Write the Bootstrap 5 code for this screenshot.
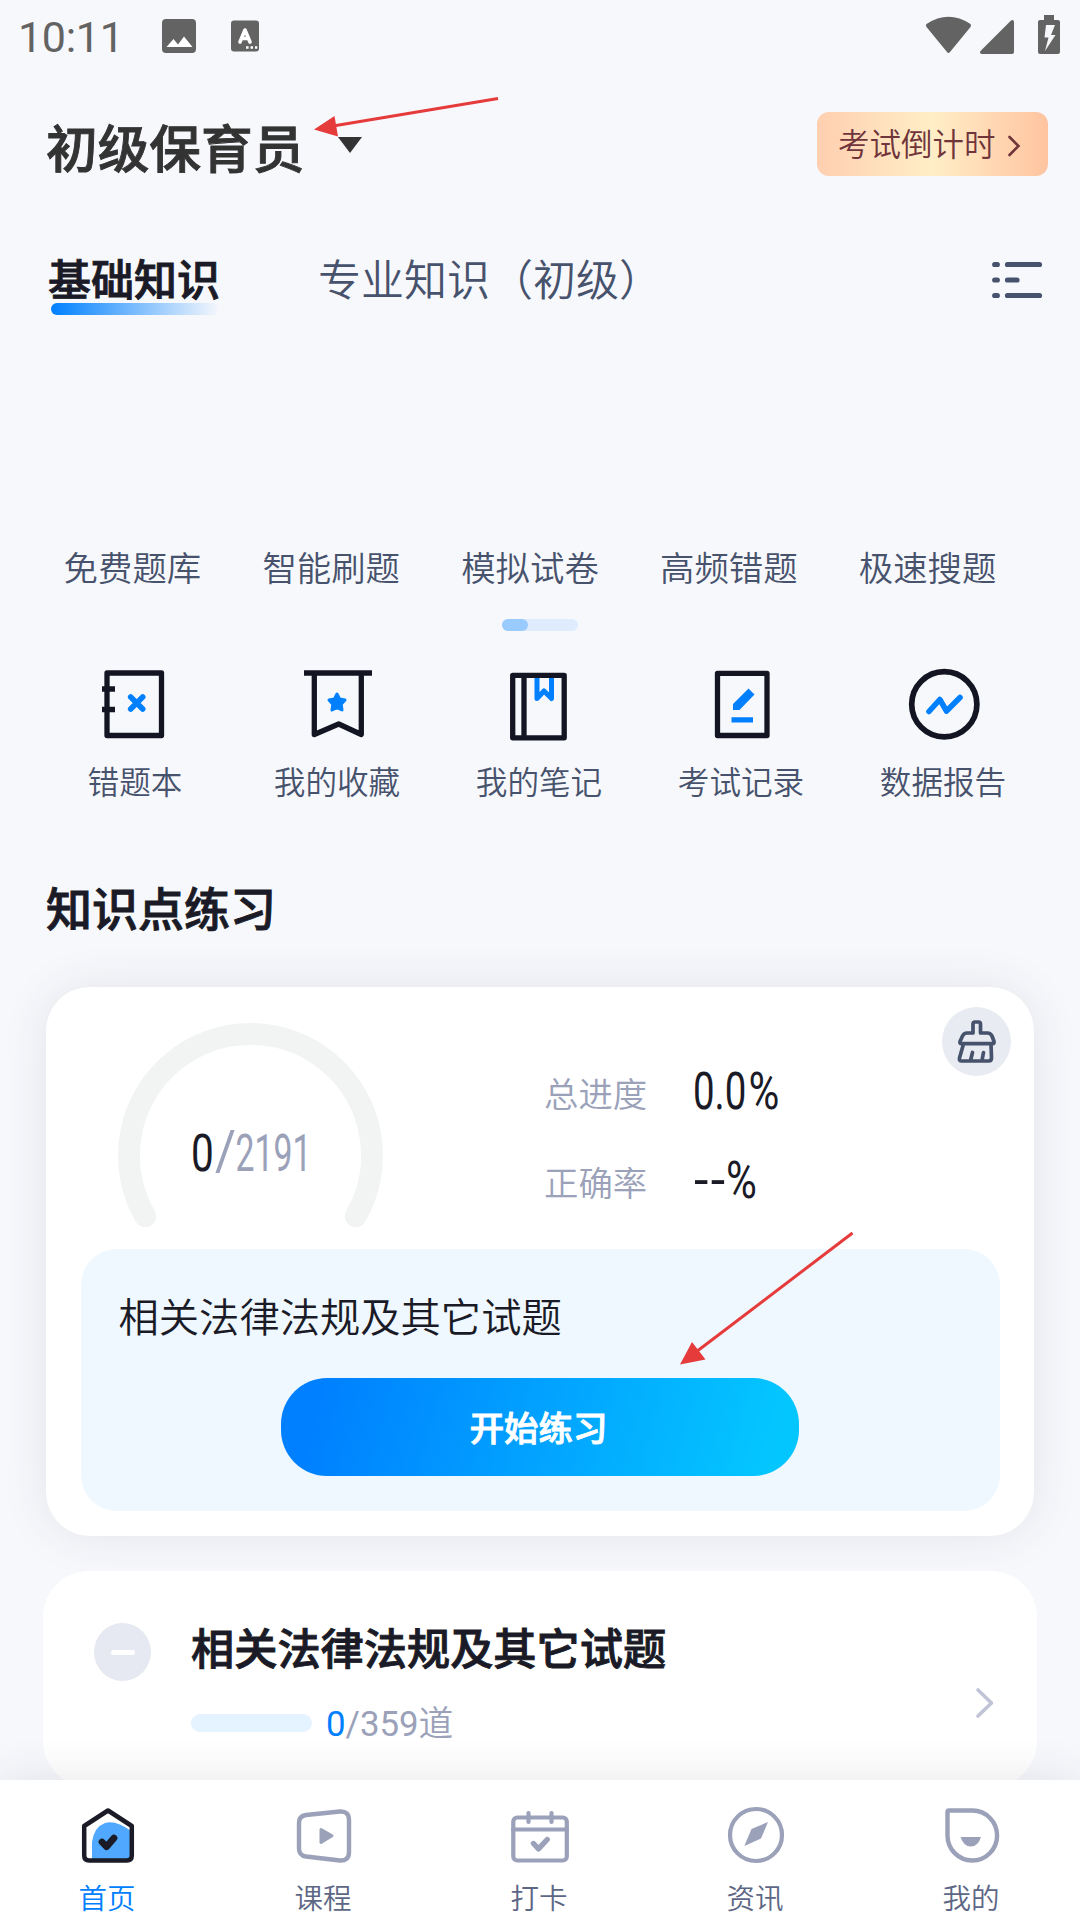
<!DOCTYPE html>
<html lang="zh-CN">
<head>
<meta charset="utf-8">
<meta name="viewport" content="width=device-width, initial-scale=1">
<title>初级保育员</title>
<link rel="stylesheet" href="https://cdn.jsdelivr.net/npm/bootstrap@5.3.0/dist/css/bootstrap.min.css">
<style>
:root{--ink:#1a1b26;--slate:#47526c;--mute:#9aa1b9;--brand:#0080ff}
body{width:1080px;height:1920px;overflow:hidden;background:#f7f8fc;font-family:"Noto Sans CJK SC",sans-serif;font-weight:350;color:var(--ink);line-height:1}
svg{display:block;flex:none;overflow:visible}
.heavy{font-weight:500;-webkit-text-stroke:.9px currentColor}
.roboto{font-family:Roboto,"Noto Sans CJK SC",sans-serif}
.screen{width:1080px;height:1920px;white-space:nowrap}
.statusbar{height:72px;padding:0 20px 0 18px;color:#636363}
.clock{font-size:43px;font-weight:400;letter-spacing:-.3px;width:144px;padding-top:3px}
.topbar{height:144px;padding:0 32px 0 46px}
.exam-name{font-size:51.7px;color:#333;line-height:60px;margin-right:33px;padding-top:3px}
.countdown{width:231px;height:64px;border-radius:12px;border:0;padding:0 28px 2px 21px;font-size:31.5px;font-weight:350;line-height:1;color:#70343b;background:linear-gradient(90deg,#ffcfb0,#ffeec7 50%,#ffc4a0)}
.tabs-row{height:184px;padding:31px 38px 0 48px;font-size:43px;line-height:60px;color:var(--slate)}
.tab-on{color:var(--ink);width:270px}
.tab-line{height:12px;width:169px;margin:-4px 0 0 3px;border-radius:6px;background:linear-gradient(90deg,#0080ff,#f7f8fc)}
.entry-row{padding:146px 53px 0 33px;font-size:34.4px;line-height:40px;color:var(--slate)}
.pager{width:76px;height:12px;border-radius:6px;margin-top:33px;background:#deecfd}
.pager-on{width:26px;height:12px;border-radius:6px;background:#9acbfe}
.tool-row{padding:29px 36px 0 34px;font-size:31.6px;line-height:40px;color:var(--slate)}
.tool-row svg{width:100px;height:90px;margin:0 auto 10px}
.section-title{font-size:46px;padding-left:46px;margin:76px 0 51px;line-height:60px}
.panel{margin:0 46px;height:549px;border-radius:44px;background:#fff;box-shadow:0 0 46px rgba(60,60,70,.10)}
.stats{height:262px;padding:36px 23px 0 72px}
.figures{margin:23px 0 0 161px}
.figure-row{height:89px}
.stat-label{font-size:34.4px;color:var(--mute);width:150px;padding-top:4px}
.digits{font-family:Roboto,sans-serif;font-size:52px;font-weight:400;fill:var(--ink)}
.digits-mute{fill:var(--mute)}
.broom{width:69px;height:69px;background:#e8ebf1;margin-top:-16px}
.next-box{margin:0 34.5px;height:262px;border-radius:36px;background:#eff7ff;padding-top:36px}
.next-name{font-size:40.3px;line-height:60px;padding-left:38px}
.start-btn,.start-btn:hover{width:518px;height:98px;margin-top:33px;padding:0 3px 0 0;border-radius:46px;border:0;font-size:34.4px;color:#fff;background:linear-gradient(105deg,#0080ff 8%,#04c6ff 94%)}
.chapter{margin:35px 43px 0;height:216px;border-radius:46px;background:#fff;padding:0 43px 0 51px}
.minus{width:57px;height:58px;border-radius:50%;background:#e6e9f1;margin:52px 40px 0 0}
.minus-bar{width:24px;height:5px;border-radius:3px;background:#fff}
.chapter-name{font-size:43.2px;line-height:60px;margin-top:45px}
.track{width:121px;height:17.5px;border-radius:9px;background:#e5f2ff;margin-right:14px}
.count-row{margin-top:25px;height:44px}
.count{font-size:34.8px;line-height:40px;color:var(--mute);padding-top:2px}
.count-num{font-weight:400}
.count-now{color:var(--brand)}
.bottom-bar{height:140px;z-index:3;background:#fff;box-shadow:0 0 46px rgba(60,60,70,.12);font-size:28.5px;line-height:40px;color:#5d6785}
.bottom-bar svg{width:100px;height:70px;margin:20px auto 7px}
.bottom-item span{padding-right:2px}
.bottom-item.on{color:var(--brand)}
.overlay{z-index:5;pointer-events:none}
</style>
<script src="https://cdn.jsdelivr.net/npm/bootstrap@5.3.0/dist/js/bootstrap.bundle.min.js"></script>
</head>
<body>
<div class="screen position-relative overflow-hidden d-flex flex-column">
  <header class="statusbar d-flex align-items-center flex-shrink-0">
    <span class="clock roboto">10:11</span>
    <svg width="97" height="34" viewBox="162 19 97 34"><rect x="162" y="19" width="34" height="34" rx="4" fill="#636363"/><path d="M166.500 47l7-8 4.500 5.500 6-8 8.500 10.500z" fill="#fff"/><rect x="231" y="20.500" width="28" height="31" rx="3" fill="#636363"/><path d="M240 42l5-12 5 12M242 38.500h6" fill="none" stroke="#fff" stroke-width="3.600" stroke-linecap="round" stroke-linejoin="round"/><path d="M246 47.500h2.600M250.500 47.500h2.600M255 47.500h2.300" stroke="#fff" stroke-width="2.400"/></svg>
    <svg class="ms-auto" width="135" height="40" viewBox="925 16 135 40" fill="#636363"><path d="M926.500 24Q948.500 9.500 970.500 24 971.500 25 970.500 27L950 52Q948.500 54 947 52L926.500 27Q925.200 25 926.500 24zM1014 22v30q0 2-2 2h-30q-3.500-.5-1-3.500l29-29q3.500-3 4 .5z"/><path fill-rule="evenodd" d="M1044 15h10v5h4q2 0 2 2v30q0 2-2 2h-18q-2 0-2-2V22q0-2 2-2h4zM1046 25l-1.500 12.500h4L1045 51l10.500-16h-4.500l4-10z"/></svg>
  </header>

  <div class="topbar d-flex align-items-center flex-shrink-0">
    <span class="exam-name heavy">初级保育员</span>
    <svg width="26" height="18" viewBox="0 -1 26 18"><path d="M1 1h24L13 17z" fill="#333"/></svg>
    <button class="countdown btn ms-auto d-flex align-items-center justify-content-between"><span>考试倒计时</span><svg width="12" height="22" viewBox="0 -3 12 22"><path d="M1.500 2l9 9-9 9" fill="none" stroke="#70343b" stroke-width="2.600" stroke-linecap="round"/></svg></button>
  </div>

  <nav class="tabs-row d-flex flex-shrink-0">
    <div class="tab-on"><div class="heavy">基础知识</div><div class="tab-line"></div></div>
    <div>专业知识（初级）</div>
    <svg class="ms-auto mt-3" width="50" height="36" viewBox="992 263 50 36"><path d="M994.700 264.500h2.600M1007.500 264.500h32M994.700 280h2.600M1007.500 280h9.500M994.700 295.500h2.600M1007.500 295.500h32" fill="none" stroke="#47526c" stroke-width="5.200" stroke-linecap="round"/></svg>
  </nav>

  <div class="entry-row d-flex text-center flex-shrink-0">
    <div class="flex-fill w-100">免费题库</div><div class="flex-fill w-100">智能刷题</div><div class="flex-fill w-100">模拟试卷</div><div class="flex-fill w-100">高频错题</div><div class="flex-fill w-100">极速搜题</div>
  </div>
  <div class="pager mx-auto flex-shrink-0"><div class="pager-on"></div></div>

  <div class="tool-row d-flex text-center flex-shrink-0">
    <div class="flex-fill w-100"><svg viewBox="85 660 100 90"><path d="M107 673h54.500v62.500H107zM102 689h13M102 709.500h13" fill="none" stroke="#141522" stroke-width="5.300" stroke-linejoin="round"/><path d="M130.700 697l12 12M142.700 697l-12 12" stroke="#0080ff" stroke-width="5.600" stroke-linecap="round"/></svg>错题本</div>
    <div class="flex-fill w-100"><svg viewBox="287 660 100 90"><path d="M304 673h68M314.300 673v61.500l24.400-10.500 22.600 10.500V673" fill="none" stroke="#141522" stroke-width="5.300" stroke-linejoin="round"/><path d="M337 694l2.500 5 5.500 1-3.800 4.200.8 5.800-5-2.300-5 2.300.8-5.800-3.800-4.200 5.500-1z" fill="#0080ff" stroke="#0080ff" stroke-width="3" stroke-linejoin="round"/></svg>我的收藏</div>
    <div class="flex-fill w-100"><svg viewBox="489 660 100 90"><path d="M537 676v22.500l7-7.500 7.500 7.500V676" fill="none" stroke="#0080ff" stroke-width="5" stroke-linejoin="round"/><path d="M512.700 675.300h51.500v62.500h-51.500zM524 675v62" fill="none" stroke="#141522" stroke-width="5.300" stroke-linejoin="round"/></svg>我的笔记</div>
    <div class="flex-fill w-100"><svg viewBox="691 660 100 90"><path d="M717.500 673.300H767v62.200h-49.500z" fill="none" stroke="#141522" stroke-width="5.300" stroke-linejoin="round"/><path d="M733 704l15.500-15.500 6 6L739.500 710H733zM731.500 717.200h21.500v5.300h-21.500z" fill="#0080ff"/></svg>考试记录</div>
    <div class="flex-fill w-100"><svg viewBox="893 660 100 90"><circle cx="944.300" cy="704.300" r="32.600" fill="none" stroke="#141522" stroke-width="5.700"/><path d="M929 711.500l10.800-12 6.700 11.500 13.500-13.500" fill="none" stroke="#0080ff" stroke-width="5.600" stroke-linecap="round" stroke-linejoin="round"/></svg>数据报告</div>
  </div>

  <h2 class="section-title heavy flex-shrink-0">知识点练习</h2>

  <section class="panel flex-shrink-0">
    <div class="stats d-flex align-items-start">
      <svg width="265" height="200" viewBox="118 1023 265 200"><path d="M145.300 1216.200A121.500 121.500 0 1 1 355.700 1216.200" fill="none" stroke="#f2f4f4" stroke-width="22" stroke-linecap="round"/><g class="digits"><text transform="translate(191 1171) scale(.78 1)">0</text><text class="digits-mute" transform="translate(215 1170) scale(.98 1.06)">/</text><text class="digits-mute" transform="translate(235.500 1171) scale(.65 1)">2191</text></g></svg>
      <div class="figures">
        <div class="figure-row d-flex align-items-center"><span class="stat-label">总进度</span><svg class="digits" width="90" height="38"><text transform="translate(-1 36.500) scale(.74 1)">0.0</text><text transform="translate(54.500 36.500) scale(.81 1)">%</text></svg></div>
        <div class="figure-row d-flex align-items-center"><span class="stat-label">正确率</span><svg class="digits" width="90" height="38"><text transform="translate(0 36.500)" letter-spacing="2.500">--</text><text transform="translate(32 36.500) scale(.81 1)">%</text></svg></div>
      </div>
      <button class="broom btn rounded-circle border-0 p-0 ms-auto"><svg width="69" height="69" viewBox="942.500 1007 69 69"><path d="M973.500 1033v-9q0-2 2-2h3.500q2 0 2 2v9h7q3 0 4.500 3l2 5.500q.5 2.200-1.500 2.200h-31q-2 0-1.500-2.200l2.500-5.500q1.500-3 4.500-3zM964 1044l-4 14q-.5 3 2 3h27q3 0 3-3l-.5-14M971 1060.500l2-8M982.500 1060.500l1.500-8" fill="none" stroke="#47526c" stroke-width="3.700" stroke-linecap="round" stroke-linejoin="round"/></svg></button>
    </div>
    <div class="next-box">
      <div class="next-name">相关法律法规及其它试题</div>
      <button class="start-btn btn d-block mx-auto heavy">开始练习</button>
    </div>
  </section>

  <section class="chapter flex-shrink-0 d-flex">
    <div class="minus d-flex align-items-center justify-content-center"><div class="minus-bar"></div></div>
    <div>
      <div class="chapter-name heavy">相关法律法规及其它试题</div>
      <div class="count-row d-flex align-items-center"><div class="track"></div><span class="count roboto"><span class="count-num"><span class="count-now">0</span>/359</span>道</span></div>
    </div>
    <svg class="ms-auto align-self-center" width="18" height="90" viewBox="976 1634 18 90"><path d="M978 1690l13.500 13-13.500 13" fill="none" stroke="#c0c4d6" stroke-width="3.600" stroke-linecap="round" stroke-linejoin="round"/></svg>
  </section>

  <nav class="bottom-bar position-absolute bottom-0 start-0 w-100 d-flex text-center">
    <div class="bottom-item on flex-fill w-100"><svg viewBox="58 1800 100 70"><path d="M92 1860v-18q2-15 13-19 11-3 26 8v29z" fill="#50a8ff"/><path d="M108 1810.500l23.800 15.500v29.500q0 5-5 5H89.200q-5 0-5-5V1826z" fill="none" stroke="#1a1b26" stroke-width="4.500" stroke-linejoin="round"/><path d="M102 1842l4.500 4.700 7.500-8.700" fill="none" stroke="#1a1b26" stroke-width="6.800" stroke-linecap="round" stroke-linejoin="round"/></svg><span>首页</span></div>
    <div class="bottom-item flex-fill w-100"><svg viewBox="274 1800 100 70"><path d="M306 1815l34-3.500q9-.5 9 8.500v32q0 9-9 8.500l-34-4q-7-1-7-8V1823q0-7 7-8z" fill="none" stroke="#9aa1b9" stroke-width="4.400" stroke-linejoin="round"/><path d="M321 1829.500l11 6.200-11 6.800z" fill="#9aa1b9" stroke="#9aa1b9" stroke-width="3" stroke-linejoin="round"/></svg><span>课程</span></div>
    <div class="bottom-item flex-fill w-100"><svg viewBox="490 1800 100 70"><rect x="513.300" y="1817.500" width="53.500" height="43" rx="4" fill="none" stroke="#9aa1b9" stroke-width="4.200"/><path d="M513 1829.500h54M528.500 1813v9M551.500 1813v9" stroke="#9aa1b9" stroke-width="4.200" stroke-linecap="round"/><path d="M533.500 1843.500l5 5.300 8.700-9.300" fill="none" stroke="#9aa1b9" stroke-width="5.400" stroke-linecap="round" stroke-linejoin="round"/></svg><span>打卡</span></div>
    <div class="bottom-item flex-fill w-100"><svg viewBox="706 1800 100 70"><circle cx="756" cy="1835" r="26" fill="none" stroke="#9aa1b9" stroke-width="4.200"/><path d="M768 1822l-16.500 7-7.200 17 16.700-7.500z" fill="#9aa1b9"/></svg><span>资讯</span></div>
    <div class="bottom-item flex-fill w-100"><svg viewBox="922 1800 100 70"><path d="M947.500 1835.500V1812q0-1.500 1.500-1.500h23.500a24.800 25 0 1 1-25 25z" fill="none" stroke="#9aa1b9" stroke-width="4.400"/><path d="M960.500 1837h20.500q-3 9.500-10.200 9.500t-10.300-9.500z" fill="#9aa1b9"/></svg><span>我的</span></div>
  </nav>

  <svg class="overlay position-absolute top-0 start-0" width="1080" height="1920" viewBox="0 0 1080 1920"><g stroke="#e53b3b" stroke-width="3"><path d="M498 98.500L330 126.500"/><path d="M852.500 1233L696 1352"/></g><path d="M314 129.500l20.500-13.500 3.500 20.500zM680 1364.500l12-22.500 13.500 17.500z" fill="#e53b3b"/></svg>
</div>
</body>
</html>
